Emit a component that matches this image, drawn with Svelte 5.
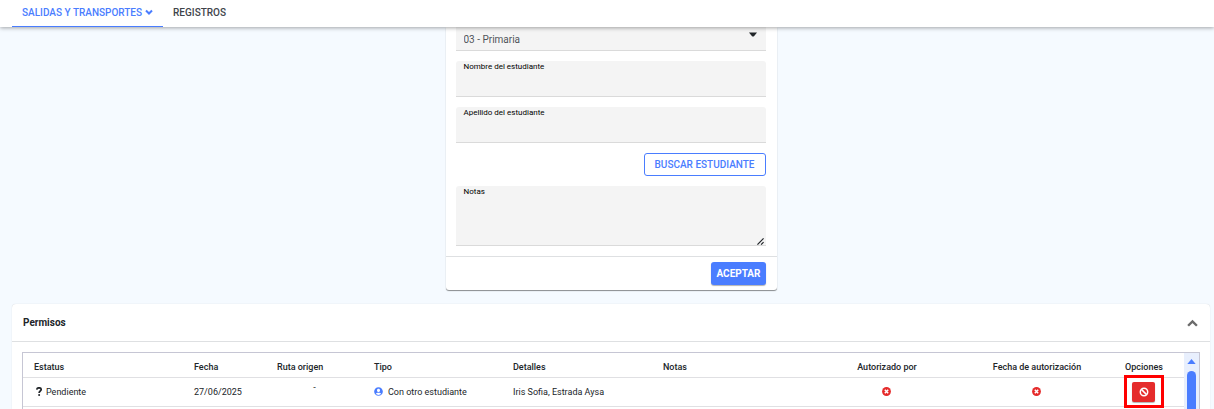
<script lang="ts">
  let level: string = '03 - Primaria';
  let firstName: string = '';
  let lastName: string = '';
  let notes: string = '';
  let open = true;

  const columns = [
    { label: 'Estatus', width: 160 },
    { label: 'Fecha', width: 83 },
    { label: 'Ruta origen', width: 97 },
    { label: 'Tipo', width: 139 },
    { label: 'Detalles', width: 150 },
    { label: 'Notas', width: 160 },
    { label: 'Autorizado por', width: 150, center: true },
    { label: 'Fecha de autorización', width: 150, center: true },
    { label: 'Opciones', width: 72, center: true }
  ];

  const total = columns.reduce((sum, col) => sum + col.width, 0);

  let permits = [
    {
      status: 'Pendiente',
      date: '27/06/2025',
      route: '-',
      type: 'Con otro estudiante',
      details: 'Iris Sofia, Estrada Aysa',
      notes: ''
    }
  ];
</script>

{#snippet denied()}
  <svg class="icon-denied" viewBox="0 0 512 512" role="img" aria-label="No autorizado">
    <circle cx="256" cy="256" r="252" fill="currentColor" />
    <path d="M160 160L352 352M352 160L160 352" stroke="#fff" stroke-width="88" />
  </svg>
{/snippet}

<div class="page">
  <nav class="navbar">
    <a class="nav-link nav-active" href="#salidas">
      SALIDAS Y TRANSPORTES
      <svg class="nav-caret" viewBox="0 0 8 8" fill="none">
        <path d="M1 2.500L4 5.500L7 2.500" stroke="currentColor" stroke-width="2" />
      </svg>
    </a>
    <a class="nav-link" href="#registros">REGISTROS</a>
  </nav>

  <main>
    <form class="card" on:submit|preventDefault>
      <div class="card-body">
        <div class="select-field">
          <select aria-label="Nivel" bind:value={level}>
            <option>03 - Primaria</option>
          </select>
          <svg class="select-arrow" viewBox="0 0 8 5">
            <path d="M0 0.5H8L5 4.2Q4 5 3 4.2Z" fill="currentColor" />
          </svg>
        </div>

        <div class="field">
          <label for="first-name">Nombre del estudiante</label>
          <input id="first-name" type="text" bind:value={firstName} />
        </div>

        <div class="field">
          <label for="last-name">Apellido del estudiante</label>
          <input id="last-name" type="text" bind:value={lastName} />
        </div>

        <button type="button" class="btn btn-outline">BUSCAR ESTUDIANTE</button>

        <div class="field field-area">
          <label for="notes">Notas</label>
          <textarea id="notes" bind:value={notes}></textarea>
          <svg class="grip" viewBox="0 0 8 8" fill="none">
            <path d="M0.5 7.5L7.5 0.5M4.7 7.5L7.5 4.7" stroke="currentColor" stroke-width="1.4" />
          </svg>
        </div>
      </div>
      <div class="card-footer">
        <button type="submit" class="btn btn-primary">ACEPTAR</button>
      </div>
    </form>

    <section class="panel">
      <header class="panel-header">
        <h2>Permisos</h2>
        <button
          type="button"
          class="toggle"
          aria-label="Contraer"
          aria-expanded={open}
          on:click={() => (open = !open)}
        >
          <svg viewBox="0 0 10 7" fill="none">
            <path d="M1 6L5 2L9 6" stroke="currentColor" stroke-width="2.2" />
          </svg>
        </button>
      </header>

      {#if open}
        <div class="table-box">
          <table>
            <colgroup>
              {#each columns as col}
                <col style="width: {(col.width / total) * 100}%" />
              {/each}
            </colgroup>
            <thead>
              <tr>
                {#each columns as col}
                  <th class:center={col.center}>{col.label}</th>
                {/each}
              </tr>
            </thead>
            <tbody>
              {#each permits as permit}
                <tr>
                  <td>
                    <span class="with-icon status">
                      <svg class="icon-question" viewBox="0 0 6 9" fill="none">
                        <path
                          d="M0.7 2.6C1 1.2 1.9 0.8 3 0.8C4.3 0.8 5.2 1.5 5.2 2.6C5.2 4.1 3.1 4 3.1 6"
                          stroke="currentColor"
                          stroke-width="1.7"
                        />
                        <circle cx="3.1" cy="7.9" r="1" fill="currentColor" />
                      </svg>
                      {permit.status}
                    </span>
                  </td>
                  <td>{permit.date}</td>
                  <td class="route">{permit.route}</td>
                  <td>
                    <span class="with-icon">
                      <svg class="icon-user" viewBox="0 0 496 512">
                        <path
                          fill="currentColor"
                          d="M248 8C111 8 0 119 0 256s111 248 248 248 248-111 248-248S385 8 248 8zm0 96c48.600 0 88 39.400 88 88s-39.400 88-88 88-88-39.400-88-88 39.400-88 88-88zm0 344c-58.700 0-111.300-26.600-146.500-68.200 18.800-35.400 55.600-59.800 98.500-59.800 2.400 0 4.800.4 7.100 1.100 13 4.200 26.600 6.900 40.900 6.900 14.300 0 28-2.700 40.900-6.900 2.300-.7 4.700-1.100 7.100-1.100 42.900 0 79.700 24.400 98.500 59.800C359.300 421.400 306.700 448 248 448z"
                        />
                      </svg>
                      {permit.type}
                    </span>
                  </td>
                  <td>{permit.details}</td>
                  <td>{permit.notes}</td>
                  <td class="center">{@render denied()}</td>
                  <td class="center">{@render denied()}</td>
                  <td class="center">
                    <span class="option">
                      <button type="button" class="cancel" aria-label="Cancelar permiso">
                        <svg viewBox="0 0 10 10" fill="none" stroke="currentColor" stroke-width="1.5">
                          <circle cx="5" cy="5" r="3.700" />
                          <path d="M2.400 2.400L7.600 7.600" />
                        </svg>
                      </button>
                      <span class="highlight"></span>
                    </span>
                  </td>
                </tr>
              {/each}
            </tbody>
          </table>
          <div class="scrollbar" aria-hidden="true">
            <svg viewBox="0 0 10 6"><path d="M5 0L10 6H0Z" fill="currentColor" /></svg>
            <span class="thumb"></span>
          </div>
        </div>
      {/if}
    </section>
  </main>
</div>

<style>
  :global(body) {
    margin: 0;
  }

  .page {
    display: flex;
    flex-direction: column;
    height: 100vh;
    overflow: hidden;
    background-color: #f5faff;
    color: #212529;
    font-family: Roboto, 'Liberation Sans', sans-serif;
    font-size: 9px;
  }

  .page :global(*) {
    box-sizing: border-box;
  }

  button,
  input,
  select,
  textarea {
    margin: 0;
    padding: 0;
    border: none;
    font-family: inherit;
  }

  svg {
    display: block;
    flex-shrink: 0;
  }

  .navbar {
    position: relative;
    z-index: 1;
    display: flex;
    flex-shrink: 0;
    height: 27px;
    padding: 0 12px;
    background-color: #fff;
    box-shadow: 0 1px 4px rgba(0, 0, 0, 0.35);
  }

  .nav-link {
    display: flex;
    align-items: center;
    gap: 3px;
    padding: 0 10px 2px;
    border-bottom: 1px solid transparent;
    color: #40444a;
    font-size: 10px;
    font-weight: 500;
    text-decoration: none;
  }

  .nav-active {
    border-color: #4a7dff;
    color: #4a7dff;
  }

  .nav-caret {
    width: 8px;
    height: 8px;
  }

  main {
    display: flex;
    flex: 1;
    flex-direction: column;
    gap: 14px;
    min-height: 0;
    padding: 0 4px 0 12px;
  }

  .card {
    flex-shrink: 0;
    align-self: center;
    width: 331px;
    border-radius: 0 0 3px 3px;
    background-color: #fff;
    box-shadow: 0 1px 1px rgba(0, 0, 0, 0.45);
  }

  .card-body {
    display: flex;
    flex-direction: column;
    gap: 10px;
    padding: 0 11px 10px 10px;
  }

  .select-field {
    position: relative;
  }

  select {
    display: block;
    width: 100%;
    height: 24px;
    padding: 2px 8px 0;
    appearance: none;
    border-bottom: 1px solid #dadada;
    background-color: #f4f4f4;
    color: #50545a;
    font-size: 10px;
  }

  .select-arrow {
    position: absolute;
    top: 5px;
    right: 9px;
    width: 8px;
    height: 5px;
    pointer-events: none;
  }

  .field {
    position: relative;
    display: flex;
    flex-direction: column;
    height: 36px;
    border-bottom: 1px solid #dadada;
    border-radius: 3px 3px 0 0;
    background-color: #f4f4f4;
  }

  .field-area {
    height: 60px;
  }

  label {
    padding: 0 8px;
    color: #000;
    font-size: 8px;
    line-height: 12px;
  }

  input,
  textarea {
    flex: 1;
    width: 100%;
    min-height: 0;
    padding: 0 8px;
    background: none;
    font-size: 10px;
    resize: none;
  }

  .grip {
    position: absolute;
    right: 2px;
    bottom: 0;
    width: 7px;
    height: 7px;
    pointer-events: none;
  }

  .btn {
    border-radius: 3px;
    font-size: 10px;
    font-weight: 500;
    cursor: pointer;
  }

  .btn-outline {
    align-self: flex-end;
    height: 23px;
    padding: 0 10px;
    border: 1px solid #4a7dff;
    background-color: #fff;
    color: #4a7dff;
  }

  .card-footer {
    display: flex;
    justify-content: flex-end;
    padding: 5px 11px 5px 10px;
    border-top: 1px solid #dee0e2;
  }

  .btn-primary {
    height: 23px;
    padding: 0 5px;
    background-color: #4a7dff;
    box-shadow: 0 1px 1px rgba(0, 0, 0, 0.3);
    color: #fff;
    font-weight: 700;
  }

  .panel {
    display: flex;
    flex: 1;
    flex-direction: column;
    min-height: 0;
    border-radius: 4px 4px 0 0;
    background-color: #fff;
    box-shadow: 0 0 1px rgba(0, 0, 0, 0.2);
  }

  .panel-header {
    display: flex;
    flex-shrink: 0;
    align-items: center;
    justify-content: space-between;
    height: 38px;
    padding: 0 12px 0 11px;
    border-bottom: 1px solid #dee0e2;
  }

  h2 {
    margin: 0;
    font-size: 10px;
    font-weight: 700;
  }

  .toggle {
    background: none;
    color: #6b6b6b;
    cursor: pointer;
  }

  .toggle svg {
    width: 11px;
    height: 8px;
  }

  .table-box {
    display: flex;
    flex: 1;
    align-items: flex-start;
    min-height: 0;
    margin: 10px 10px 0;
    border: 1px solid #c6c6d4;
    border-bottom: none;
  }

  table {
    flex: 1;
    table-layout: fixed;
    border-collapse: collapse;
  }

  th,
  td {
    height: 29px;
    padding: 0 0 0 11px;
    border-bottom: 1px solid #e0e0e3;
    text-align: left;
    white-space: nowrap;
  }

  th {
    height: 24px;
    padding-top: 4px;
    font-weight: 500;
  }

  .center {
    padding-left: 0;
    text-align: center;
  }

  .center:last-child {
    padding-right: 8px;
  }

  .route {
    padding: 4px 0 0;
    text-align: center;
    vertical-align: top;
  }

  .with-icon {
    display: flex;
    align-items: center;
    gap: 5px;
  }

  .status {
    gap: 4px;
    padding-left: 2px;
  }

  .icon-question {
    width: 6px;
    height: 9px;
  }

  .icon-user {
    width: 9px;
    height: 9px;
    color: #4a7dff;
  }

  .icon-denied {
    width: 9px;
    height: 9px;
    margin: 0 auto;
    color: #e52b2b;
  }

  .option {
    position: relative;
    display: inline-block;
    vertical-align: middle;
  }

  .cancel {
    display: flex;
    align-items: center;
    justify-content: center;
    width: 23px;
    height: 20px;
    border-radius: 2px;
    background-color: #e52b2b;
    box-shadow: 0 1px 1px rgba(0, 0, 0, 0.3);
    color: #fff;
    cursor: pointer;
  }

  .cancel svg {
    width: 10px;
    height: 10px;
  }

  .highlight {
    position: absolute;
    inset: -7px -9px -6px -8px;
    border: 3px solid #f00;
    pointer-events: none;
  }

  .scrollbar {
    display: flex;
    flex-direction: column;
    align-self: stretch;
    align-items: center;
    gap: 7px;
    width: 15px;
    padding-top: 6px;
    background-color: #e8effd;
    color: #4a7dff;
  }

  .scrollbar svg {
    width: 9px;
    height: 5px;
  }

  .thumb {
    flex: 1;
    width: 9px;
    border-radius: 5px 5px 0 0;
    background-color: #4a7dff;
  }
</style>
